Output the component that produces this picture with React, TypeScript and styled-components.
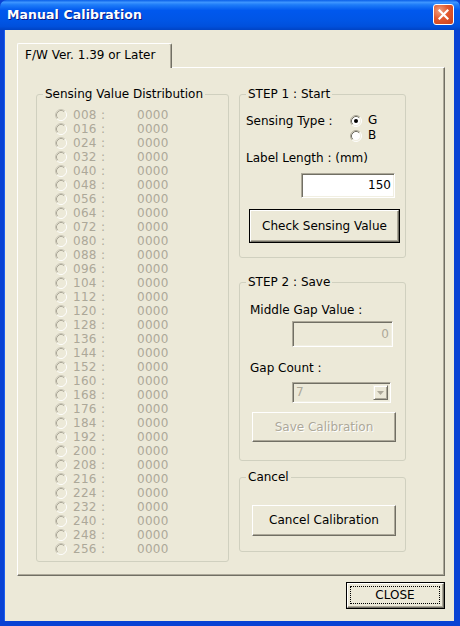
import React from "react";
import styled, { createGlobalStyle } from "styled-components";

const Global = createGlobalStyle`
  html, body { margin: 0; padding: 0; background: #ffffff; }
  body { font-family: "DejaVu Sans", Tahoma, sans-serif; font-size: 12px; color: #000; }
  * { box-sizing: border-box; }
`;

const Window = styled.div`
  width: 460px;
  height: 626px;
  display: flex;
  flex-direction: column;
  background: #0842d4;
`;

const TitleBar = styled.div`
  height: 30px;
  flex: none;
  display: flex;
  align-items: center;
  justify-content: space-between;
  padding: 0 6px 1px 7px;
  border-radius: 7px 7px 0 0;
  background: linear-gradient(
    to bottom,
    #0a5fe8 0%,
    #3d95ff 8%,
    #1e7cf8 16%,
    #0058ee 35%,
    #0055e5 70%,
    #0050dc 88%,
    #0043c4 100%
  );
`;

const Title = styled.span`
  font-family: "DejaVu Sans", Tahoma, sans-serif;
  font-weight: bold;
  font-size: 12.5px;
  color: #ffffff;
  text-shadow: 1px 1px 0 #0a1883;
  letter-spacing: 0.1px;
`;

const CloseX = styled.div`
  width: 21px;
  height: 21px;
  border: 1px solid #ffffff;
  border-radius: 3px;
  background: radial-gradient(circle at 30% 30%, #f0a080 0%, #e2582e 45%, #c8401c 100%);
  display: flex;
  align-items: center;
  justify-content: center;
`;

const Body = styled.div`
  flex: 1;
  display: flex;
  flex-direction: column;
  background: #ece9d8;
  border-left: 4px solid #0842d4;
  border-right: 6px solid #0842d4;
  border-bottom: 5px solid #0842d4;
  box-shadow: inset 1px 0 0 #1a5ef0;
  padding: 13px 9px 0 13px;
`;

const TabStrip = styled.div`
  display: flex;
  height: 24px;
`;

const Tab = styled.div`
  position: relative;
  z-index: 1;
  width: 155px;
  height: 25px;
  margin-bottom: -1px;
  background: #ece9d8;
  border-top: 1px solid #ffffff;
  border-left: 1px solid #ffffff;
  border-right: 1px solid #716f64;
  border-radius: 2px 2px 0 0;
  box-shadow: inset -1px 0 0 #aca899;
  padding: 0 0 2px 7px;
  display: flex;
  align-items: center;
  white-space: nowrap;
`;

const Panel = styled.div`
  width: 100%;
  height: 509px;
  border-top: 1px solid #ffffff;
  border-left: 1px solid #ffffff;
  border-right: 1px solid #716f64;
  border-bottom: 1px solid #716f64;
  box-shadow: inset -1px -1px 0 #aca899;
  padding: 19px 0 0 18px;
  display: grid;
  grid-template-columns: 193px 167px;
  column-gap: 10px;
  align-items: start;
`;

const Group = styled.fieldset<{ $top?: number }>`
  margin: ${(p) => p.$top ?? 0}px 0 0 0;
  padding: 0;
  min-width: 0;
  border: 1px solid #d0d0bf;
  border-radius: 3px;
`;

const Legend = styled.legend`
  margin-left: 6px;
  padding: 0 2px;
  line-height: 14px;
  font-size: 12px;
`;

const GroupContent = styled.div<{ $pt: number; $pb: number }>`
  display: flex;
  flex-direction: column;
  align-items: flex-start;
  padding: ${(p) => p.$pt}px 0 ${(p) => p.$pb}px 0;
`;

const RightColumn = styled.div`
  display: flex;
  flex-direction: column;
`;

const DistRow = styled.div`
  height: 14px;
  display: grid;
  grid-template-columns: 12px 58px auto;
  column-gap: 6px;
  align-items: center;
  margin-left: 18px;
  color: #aca899;
  line-height: 14px;
  letter-spacing: 0.3px;
`;

const Text = styled.div<{ $ml?: number; $mt?: number; $disabled?: boolean }>`
  margin-left: ${(p) => p.$ml ?? 0}px;
  margin-top: ${(p) => p.$mt ?? 0}px;
  line-height: 14px;
  color: ${(p) => (p.$disabled ? "#aca899" : "#000")};
  white-space: nowrap;
`;

const TypeGrid = styled.div`
  margin-top: 12px;
  margin-left: 6px;
  display: grid;
  grid-template-columns: 104px auto;
  grid-auto-rows: 15px;
  align-items: center;
`;

const RadioOption = styled.label`
  display: flex;
  align-items: center;
  gap: 6px;
  line-height: 15px;
`;

const TextBox = styled.div<{
  $w: number;
  $h: number;
  $ml: number;
  $mt: number;
  $disabled?: boolean;
}>`
  width: ${(p) => p.$w}px;
  height: ${(p) => p.$h}px;
  margin-left: ${(p) => p.$ml}px;
  margin-top: ${(p) => p.$mt}px;
  background: ${(p) => (p.$disabled ? "#ece9d8" : "#ffffff")};
  color: ${(p) => (p.$disabled ? "#aca899" : "#000")};
  border-top: 1px solid #aca899;
  border-left: 1px solid #aca899;
  border-right: 1px solid #ffffff;
  border-bottom: 1px solid #ffffff;
  box-shadow: inset 1px 1px 0 #716f64, inset -1px -1px 0 #f1efe2;
  display: flex;
  align-items: center;
  justify-content: flex-end;
  padding: 0 3px 1px 0;
`;

const Select = styled.div<{ $ml: number; $mt: number }>`
  width: 99px;
  height: 21px;
  margin-left: ${(p) => p.$ml}px;
  margin-top: ${(p) => p.$mt}px;
  background: #ece9d8;
  color: #aca899;
  border-top: 1px solid #aca899;
  border-left: 1px solid #aca899;
  border-right: 1px solid #ffffff;
  border-bottom: 1px solid #ffffff;
  box-shadow: inset 1px 1px 0 #716f64, inset -1px -1px 0 #f1efe2;
  display: flex;
  align-items: stretch;
  justify-content: space-between;
  padding: 2px 2px 2px 3px;
`;

const SelectValue = styled.span`
  line-height: 15px;
`;

const DropButton = styled.div`
  width: 15px;
  border-top: 1px solid #f1efe2;
  border-left: 1px solid #f1efe2;
  border-right: 1px solid #716f64;
  border-bottom: 1px solid #716f64;
  box-shadow: inset 1px 1px 0 #ffffff, inset -1px -1px 0 #aca899;
  display: flex;
  align-items: center;
  justify-content: center;
`;

const Button = styled.div<{
  $w: number;
  $h: number;
  $ml?: number;
  $mt?: number;
  $default?: boolean;
  $disabled?: boolean;
}>`
  width: ${(p) => p.$w}px;
  height: ${(p) => p.$h}px;
  margin-left: ${(p) => p.$ml ?? 0}px;
  margin-top: ${(p) => p.$mt ?? 0}px;
  background: #ece9d8;
  color: ${(p) => (p.$disabled ? "#aca899" : "#000")};
  text-shadow: ${(p) => (p.$disabled ? "1px 1px 0 #ffffff" : "none")};
  border: 1px solid ${(p) => (p.$default ? "#000" : "transparent")};
  display: flex;
  align-items: stretch;
  justify-content: stretch;
  font-size: 12px;
`;

const ButtonFace = styled.div<{ $focus?: boolean }>`
  flex: 1;
  display: flex;
  align-items: center;
  justify-content: center;
  border-top: 1px solid #ffffff;
  border-left: 1px solid #ffffff;
  border-right: 1px solid #716f64;
  border-bottom: 1px solid #716f64;
  box-shadow: inset -1px -1px 0 #aca899;
  padding: ${(p) => (p.$focus ? "2px 3px 3px 2px" : "0 0 1px 0")};
  white-space: nowrap;
`;

const FocusRect = styled.div`
  flex: 1;
  align-self: stretch;
  border: 1px dotted #000;
  display: flex;
  align-items: center;
  justify-content: center;
`;

const Footer = styled.div`
  display: flex;
  justify-content: flex-end;
  margin-top: 6px;
`;

function Radio({ checked, disabled }: { checked?: boolean; disabled?: boolean }) {
  const outerTL = disabled ? "#c9c6b7" : "#aca899";
  const innerTL = disabled ? "#aca899" : "#716f64";
  const outerBR = "#ffffff";
  const innerBR = disabled ? "#ece9d8" : "#f1efe2";
  return (
    <svg width="12" height="12" viewBox="0 0 12 12">
      <circle cx="6" cy="6" r="4.6" fill={disabled ? "#ece9d8" : "#ffffff"} />
      <path d="M2.11 9.89 A5.5 5.5 0 0 1 9.89 2.11" fill="none" stroke={outerTL} strokeWidth="1" />
      <path d="M9.89 2.11 A5.5 5.5 0 0 1 2.11 9.89" fill="none" stroke={outerBR} strokeWidth="1" />
      <path d="M2.82 9.18 A4.5 4.5 0 0 1 9.18 2.82" fill="none" stroke={innerTL} strokeWidth="1" />
      <path d="M9.18 2.82 A4.5 4.5 0 0 1 2.82 9.18" fill="none" stroke={innerBR} strokeWidth="1" />
      {checked && <circle cx="6" cy="6" r="2" fill="#000" />}
    </svg>
  );
}

const rows = Array.from({ length: 32 }, (_, i) => String((i + 1) * 8).padStart(3, "0"));

export default function App() {
  return (
    <>
      <Global />
      <Window>
        <TitleBar>
          <Title>Manual Calibration</Title>
          <CloseX>
            <svg width="11" height="11" viewBox="0 0 11 11">
              <path d="M1.5 1.5 L9.5 9.5 M9.5 1.5 L1.5 9.5" stroke="#ffffff" strokeWidth="2.2" strokeLinecap="square" />
            </svg>
          </CloseX>
        </TitleBar>
        <Body>
          <TabStrip>
            <Tab>F/W Ver. 1.39 or Later</Tab>
          </TabStrip>
          <Panel>
            <Group>
              <Legend>Sensing Value Distribution</Legend>
              <GroupContent $pt={7} $pb={5}>
                {rows.map((r) => (
                  <DistRow key={r}>
                    <Radio disabled />
                    <span>{r} :</span>
                    <span>0000</span>
                  </DistRow>
                ))}
              </GroupContent>
            </Group>
            <RightColumn>
              <Group>
                <Legend>STEP 1 : Start</Legend>
                <GroupContent $pt={0} $pb={14}>
                  <TypeGrid>
                    <span>Sensing Type :</span>
                    <RadioOption>
                      <Radio checked />
                      <span>G</span>
                    </RadioOption>
                    <span />
                    <RadioOption>
                      <Radio />
                      <span>B</span>
                    </RadioOption>
                  </TypeGrid>
                  <Text $ml={6} $mt={8}>Label Length : (mm)</Text>
                  <TextBox $w={94} $h={25} $ml={61} $mt={8}>150</TextBox>
                  <Button $w={151} $h={34} $ml={9} $mt={11} $default>
                    <ButtonFace>Check Sensing Value</ButtonFace>
                  </Button>
                </GroupContent>
              </Group>
              <Group $top={17}>
                <Legend>STEP 2 : Save</Legend>
                <GroupContent $pt={14} $pb={17}>
                  <Text $ml={10}>Middle Gap Value :</Text>
                  <TextBox $w={101} $h={26} $ml={52} $mt={4} $disabled>0</TextBox>
                  <Text $ml={10} $mt={14}>Gap Count :</Text>
                  <Select $ml={52} $mt={7}>
                    <SelectValue>7</SelectValue>
                    <DropButton>
                      <svg width="7" height="4" viewBox="0 0 7 4">
                        <path d="M0 0 L7 0 L3.5 4 Z" fill="#aca899" />
                      </svg>
                    </DropButton>
                  </Select>
                  <Button $w={146} $h={32} $ml={11} $mt={8} $disabled>
                    <ButtonFace>Save Calibration</ButtonFace>
                  </Button>
                </GroupContent>
              </Group>
              <Group $top={9}>
                <Legend>Cancel</Legend>
                <GroupContent $pt={20} $pb={14}>
                  <Button $w={146} $h={33} $ml={11}>
                    <ButtonFace>Cancel Calibration</ButtonFace>
                  </Button>
                </GroupContent>
              </Group>
            </RightColumn>
          </Panel>
          <Footer>
            <Button $w={99} $h={27} $default>
              <ButtonFace $focus>
                <FocusRect>CLOSE</FocusRect>
              </ButtonFace>
            </Button>
          </Footer>
        </Body>
      </Window>
    </>
  );
}
